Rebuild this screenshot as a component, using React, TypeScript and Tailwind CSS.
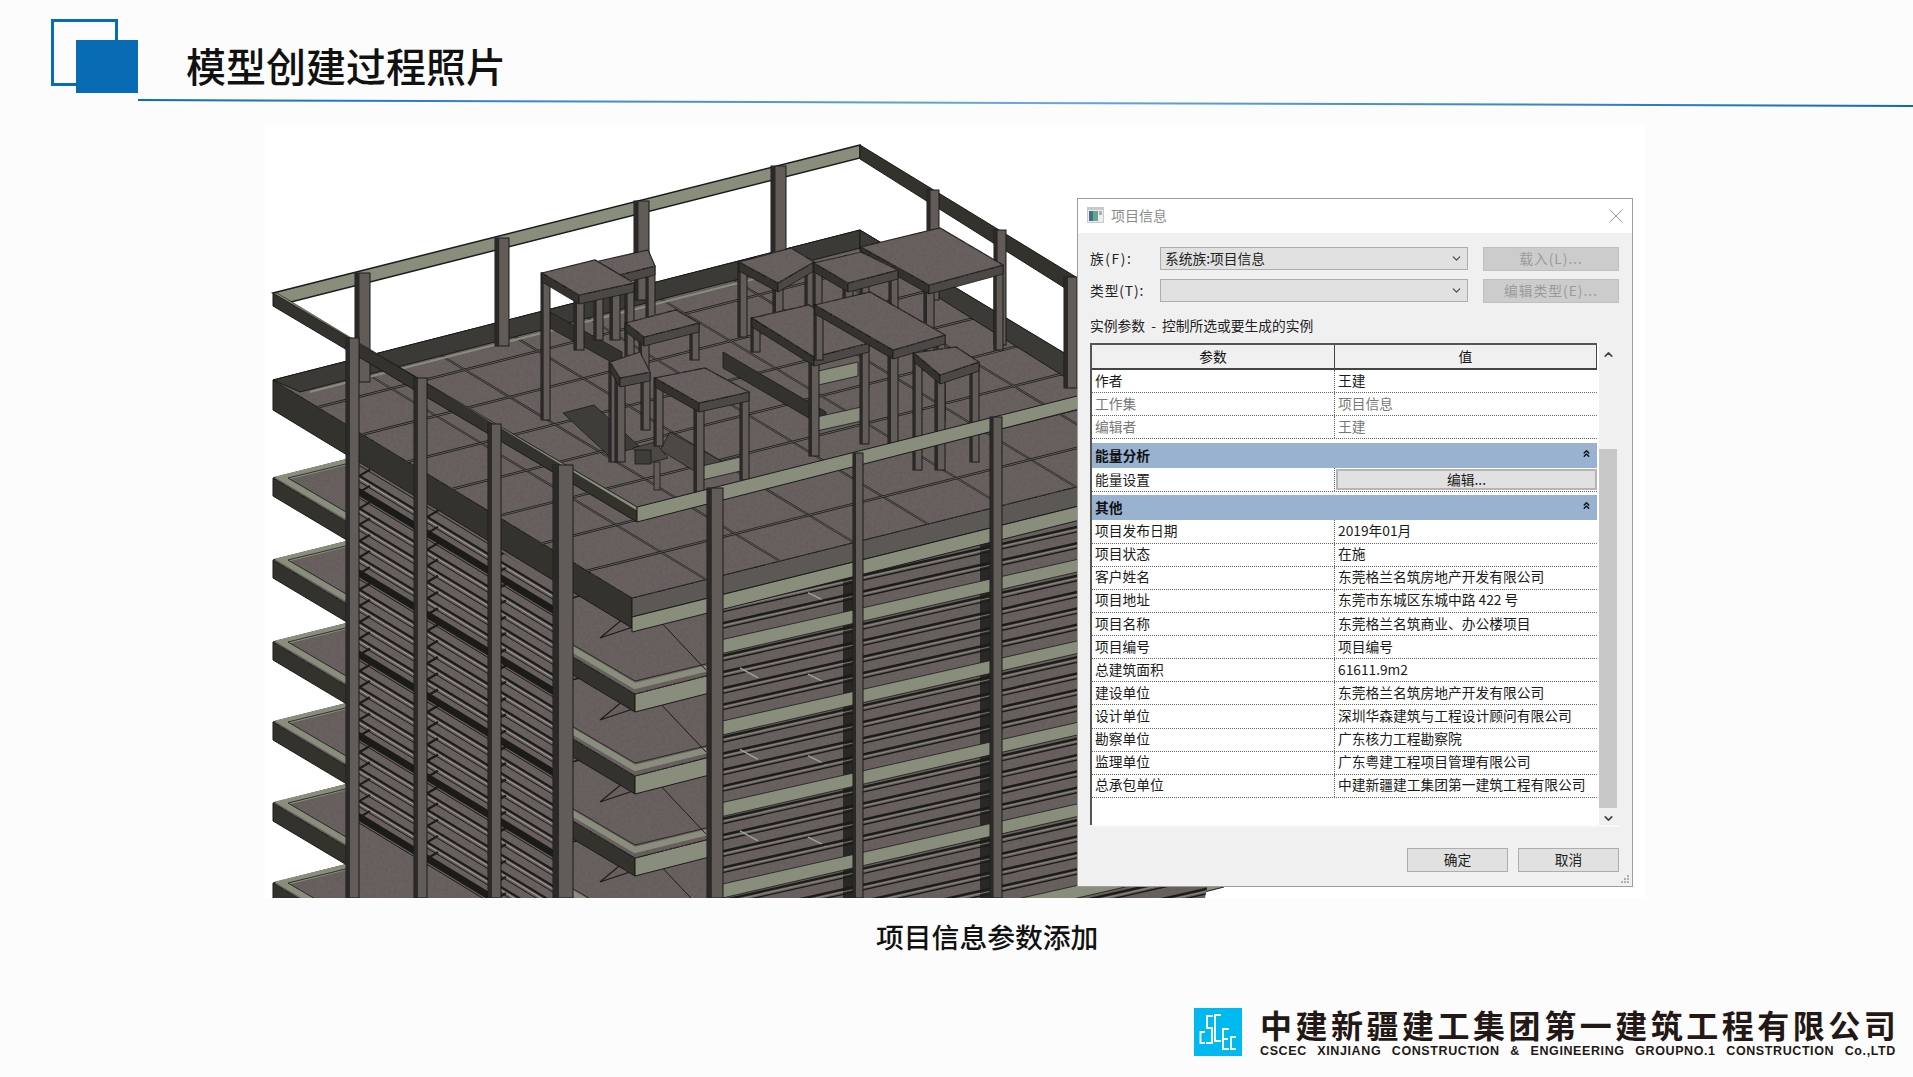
import { ChevronDown, ChevronUp, ChevronsUp, X } from 'lucide-react';

const CJK = 'font-["Noto_Sans_CJK_SC","Noto_Sans",sans-serif]';

const pts = (list: number[][]) => list.map(p => p.join(',')).join(' ');

const SAGE = '#888d7c';
const DARK = '#1b1b18';
const SIDE = '#33322d';
const STONE = '#6b6260';
const COL = '#625c59';

const FLOOR_YS = [883, 803, 722, 642, 560, 478];

function Floor({ y }: { y: number }) {
  const L = [273, y];
  const B = [860, y - 148];
  const R = [1224, y + 66];
  const F = [635, y + 216];
  return (
    <g>
      <polygon points={pts([L, F, [F[0], F[1] + 18], [L[0], L[1] + 18]])} fill={SIDE} stroke={DARK} />
      <polygon points={pts([F, R, [R[0], R[1] + 18], [F[0], F[1] + 18]])} fill={SAGE} stroke={DARK} />
      <polygon points={pts([L, B, R, F])} fill={STONE} stroke={DARK} filter="url(#stone)" />
      <polygon
        points={pts([[282, y], [860, y - 143], [1214, y + 66], [635, y + 208]])}
        fill="none"
        stroke={SAGE}
        strokeWidth={6}
      />
      <polygon
        points={pts([[288, y], [860, y - 139], [1206, y + 66], [635, y + 203]])}
        fill="none"
        stroke={DARK}
        strokeWidth={0.8}
      />
      <polyline
        points={pts([[600, y + 160], [660, y + 140], [690, y + 117], [636, y + 130], [600, y + 160]])}
        fill="none"
        stroke={DARK}
        strokeWidth={1.2}
      />
      <line x1={640} y1={y + 122} x2={706} y2={y + 192} stroke={DARK} strokeWidth={1} />
      <line x1={572} y1={y + 120} x2={660} y2={y + 96} stroke={DARK} strokeWidth={1.4} />
    </g>
  );
}

function LeftHatch() {
  const lines = [];
  for (let k = 0; k < 36; k++) {
    const y0 = 240 + k * 16.26;
    const heavy = k % 5 === 0;
    lines.push(
      <g key={k}>
        <line x1={346} y1={y0} x2={560} y2={y0 + 130} stroke="#a3a797" strokeWidth={1} transform="translate(0,3)" />
        <line x1={346} y1={y0} x2={560} y2={y0 + 130} stroke={DARK} strokeWidth={heavy ? 7 : 2.2} />
        <line x1={346} y1={y0 + 6} x2={560} y2={y0 + 136} stroke={DARK} strokeWidth={1} />
        {[0, 1, 2].map(i => (
          <line
            key={i}
            x1={358 + i * 68}
            y1={y0 + 9 + i * 41}
            x2={370 + i * 68}
            y2={y0 + 2 + i * 41}
            stroke={DARK}
            strokeWidth={2.2}
          />
        ))}
      </g>
    );
  }
  return (
    <g clipPath="url(#leftHatch)">
      <rect x={340} y={440} width={230} height={460} fill={STONE} filter="url(#stone)" />
      {lines}
    </g>
  );
}

function RightHatch() {
  const lines = [];
  for (let k = 0; k < 42; k++) {
    const y0 = 566 + (k - 6) * 16.3;
    const band = k % 5 === 0;
    lines.push(
      <g key={k}>
        {band ? (
          <polygon
            points={pts([[715, y0 + 10], [1220, y0 - 104], [1220, y0 - 92], [715, y0 + 24]])}
            fill={SAGE}
            stroke={DARK}
            strokeWidth={0.8}
          />
        ) : (
          <g>
            <line x1={715} y1={y0 + 10} x2={1220} y2={y0 - 104} stroke={DARK} strokeWidth={2.4} />
            <line x1={715} y1={y0 + 15} x2={1220} y2={y0 - 99} stroke={DARK} strokeWidth={1.4} />
            <line x1={715} y1={y0 + 12.5} x2={1220} y2={y0 - 101.5} stroke="#a0a493" strokeWidth={0.6} />
            {k % 5 === 2 && (
              <line x1={740} y1={y0 + 4} x2={758} y2={y0 + 14} stroke="#a0a493" strokeWidth={1.4} />
            )}
            {k % 5 === 3 && (
              <line x1={808} y1={y0 - 6} x2={826} y2={y0 + 3} stroke="#a0a493" strokeWidth={1.4} />
            )}
          </g>
        )}
      </g>
    );
  }
  return (
    <g clipPath="url(#rightHatch)">
      <rect x={715} y={420} width={510} height={480} fill={STONE} filter="url(#stone)" />
      <rect x={843} y={440} width={11} height={460} fill="#2a2826" />
      <rect x={980} y={420} width={11} height={480} fill="#2a2826" />
      {lines}
    </g>
  );
}

function Column({ x, y1, y2, w = 13 }: { x: number; y1: number; y2: number; w?: number }) {
  return (
    <g>
      <rect x={x} y={y1} width={w} height={y2 - y1} fill={COL} stroke={DARK} strokeWidth={1} />
      <rect x={x} y={y1} width={w * 0.3} height={y2 - y1} fill="#2b2927" />
    </g>
  );
}

type TableSpec = { top: number[][]; foot: number[] };

// top = left, rear, right, front corner of each rooftop box, foot = leg end at left, front, right
const TABLES: TableSpec[] = [
  { top: [[595, 262], [648, 250], [655, 266], [615, 276]], foot: [340, 340, 330] },
  { top: [[542, 273], [595, 260], [634, 283], [579, 295]], foot: [420, 350, 340] },
  { top: [[739, 262], [791, 248], [814, 262], [778, 283]], foot: [337, 330, 320] },
  { top: [[861, 247], [940, 228], [1003, 265], [929, 285]], foot: [330, 353, 350] },
  { top: [[814, 263], [861, 252], [898, 270], [848, 283]], foot: [323, 323, 315] },
  { top: [[626, 323], [676, 310], [699, 323], [644, 337]], foot: [365, 375, 360] },
  { top: [[752, 318], [809, 305], [869, 343], [814, 357]], foot: [352, 456, 444] },
  { top: [[815, 305], [870, 292], [945, 335], [893, 350]], foot: [360, 447, 420] },
  { top: [[914, 353], [956, 347], [979, 362], [940, 375]], foot: [470, 470, 462] },
  { top: [[610, 362], [640, 352], [650, 372], [620, 378]], foot: [462, 462, 430] },
  { top: [[655, 378], [705, 368], [749, 392], [699, 403]], foot: [446, 493, 480] }
];

function Table({ top, foot }: TableSpec) {
  const [l, , r, f] = top;
  const apron = 9;
  return (
    <g>
      <Column x={l[0] - 1} y1={l[1]} y2={foot[0]} w={9} />
      <Column x={f[0] - 5} y1={f[1]} y2={foot[1]} w={10} />
      <Column x={r[0] - 9} y1={r[1]} y2={foot[2]} w={9} />
      <polygon
        points={pts([l, f, [f[0], f[1] + apron], [l[0], l[1] + apron]])}
        fill={SIDE}
        stroke={DARK}
        strokeWidth={0.8}
      />
      <polygon
        points={pts([f, r, [r[0], r[1] + apron], [f[0], f[1] + apron]])}
        fill="#4b4845"
        stroke={DARK}
        strokeWidth={0.8}
      />
      <polygon points={pts(top)} fill={STONE} stroke={DARK} strokeWidth={1.2} filter="url(#stone)" />
    </g>
  );
}

// beams and the lift shaft that sit under the rooftop boxes
function RoofBeams() {
  return (
    <g stroke={DARK} strokeWidth={0.8}>
      <polygon points={pts([[563, 413], [594, 405], [640, 447], [608, 455]])} fill="#3f3d3a" />
      <polygon points={pts([[550, 312], [622, 352], [622, 368], [550, 328]])} fill={SIDE} />
      <polygon points={pts([[723, 352], [826, 412], [826, 428], [723, 368]])} fill={SIDE} />
      <polygon points={pts([[670, 432], [730, 466], [706, 478], [660, 450]])} fill="#4b4845" />
      <polygon points={pts([[814, 372], [858, 362], [858, 376], [814, 386]])} fill={SAGE} />
      <polygon points={pts([[812, 418], [866, 406], [866, 420], [812, 432]])} fill={SAGE} />
      <polygon points={pts([[702, 466], [745, 456], [745, 470], [702, 480]])} fill={SAGE} />
      <polygon points={pts([[633, 448], [655, 442], [668, 458], [645, 464]])} fill="#4b4845" />
      <rect x={635} y={450} width={16} height={14} fill="#3f3d3a" />
      <rect x={654} y={462} width={6} height={28} fill={COL} />
    </g>
  );
}

function Roof() {
  const L = [273, 380];
  const B = [860, 230];
  const R = [1224, 450];
  const F = [632, 598];
  const grid = [];
  for (let i = 1; i < 8; i++) {
    const t = i / 8;
    const u = [L[0] + (F[0] - L[0]) * t, L[1] + (F[1] - L[1]) * t, B[0] + (R[0] - B[0]) * t, B[1] + (R[1] - B[1]) * t];
    const v = [L[0] + (B[0] - L[0]) * t, L[1] + (B[1] - L[1]) * t, F[0] + (R[0] - F[0]) * t, F[1] + (R[1] - F[1]) * t];
    grid.push(
      <g key={i}>
        <line x1={u[0]} y1={u[1]} x2={u[2]} y2={u[3]} stroke={DARK} strokeWidth={2.4} />
        <line x1={u[0]} y1={u[1]} x2={u[2]} y2={u[3]} stroke="#a3a797" strokeWidth={0.5} />
        <line x1={v[0]} y1={v[1]} x2={v[2]} y2={v[3]} stroke={DARK} strokeWidth={2} />
        <line x1={v[0]} y1={v[1]} x2={v[2]} y2={v[3]} stroke="#a3a797" strokeWidth={0.5} />
      </g>
    );
  }
  return (
    <g>
      <polygon points={pts([L, F, [632, 628], [273, 410]])} fill={SIDE} stroke={DARK} />
      <polygon points={pts([F, R, [1224, 470], [632, 617]])} fill="#5c5855" stroke={DARK} />
      <polygon points={pts([[632, 617], [1224, 470], [1224, 484], [632, 632]])} fill={SAGE} stroke={DARK} />
      <polygon points={pts([L, B, R, F])} fill={STONE} stroke={DARK} filter="url(#stone)" />
      {grid}
      <polygon points={pts([[273, 380], [860, 230], [860, 248], [300, 392]])} fill="#3b3a36" stroke={DARK} />
      <polygon points={pts([[860, 230], [1076, 360], [1076, 384], [860, 248]])} fill="#3b3a36" stroke={DARK} />
      <line x1={310} y1={392} x2={860} y2={252} stroke={SAGE} strokeWidth={2} />
    </g>
  );
}

function TopFrame() {
  const A = [273, 293];
  const F = [637, 507];
  const R = [1224, 359];
  return (
    <g stroke={DARK}>
      <polygon points={pts([A, F, [637, 522], [273, 306]])} fill={SIDE} />
      <polygon points={pts([A, F, [637, 511], [277, 293]])} fill={SAGE} strokeWidth={0.6} />
      <polygon points={pts([F, R, [1224, 372], [637, 522]])} fill={SAGE} />
    </g>
  );
}

function Building() {
  return (
    <svg viewBox="265 125 1380 773" className="absolute inset-0 w-full h-full">
      <defs>
        <filter id="stone" x="-5%" y="-5%" width="110%" height="110%">
          <feTurbulence type="fractalNoise" baseFrequency="0.35" numOctaves={3} seed={4} result="noise" />
          <feColorMatrix
            in="noise"
            type="matrix"
            values="0 0 0 0 0.1  0 0 0 0 0.09  0 0 0 0 0.09  0.9 0 0 0 -0.28"
            result="speck"
          />
          <feComposite in="speck" in2="SourceAlpha" operator="in" result="clipped" />
          <feMerge>
            <feMergeNode in="SourceGraphic" />
            <feMergeNode in="clipped" />
          </feMerge>
        </filter>
        <clipPath id="leftHatch">
          <polygon points={pts([[346, 450], [560, 590], [560, 898], [346, 898]])} />
        </clipPath>
        <clipPath id="rightHatch">
          <polygon points={pts([[715, 590], [1224, 470], [1224, 800], [1205, 898], [715, 898]])} />
        </clipPath>
      </defs>

      {FLOOR_YS.map(y => (
        <Floor key={y} y={y} />
      ))}
      <LeftHatch />
      <RightHatch />
      <Roof />

      {/* rear frame with its columns */}
      <polygon
        points={pts([[273, 293], [860, 145], [860, 158], [291, 302]])}
        fill={SAGE}
        stroke={DARK}
        strokeWidth={1.5}
      />
      <polygon
        points={pts([[860, 145], [1076, 277], [1076, 295], [860, 159]])}
        fill={SIDE}
        stroke={DARK}
      />
      <Column x={355} y1={273} y2={382} w={15} />
      <Column x={495} y1={238} y2={346} w={14} />
      <Column x={634} y1={201} y2={300} w={15} />
      <Column x={771} y1={166} y2={254} w={15} />
      <Column x={927} y1={190} y2={300} w={12} />
      <Column x={994} y1={230} y2={345} w={12} />
      <Column x={1064} y1={277} y2={388} w={13} />

      <RoofBeams />
      {TABLES.map((t, i) => (
        <Table key={i} {...t} />
      ))}

      <TopFrame />

      {/* front columns */}
      <Column x={346} y1={338} y2={898} w={13} />
      <Column x={414} y1={378} y2={898} w={13} />
      <Column x={488} y1={424} y2={898} w={13} />
      <Column x={553} y1={465} y2={898} w={20} />
      <Column x={707} y1={488} y2={898} w={16} />
      <Column x={853} y1={453} y2={898} w={10} />
      <Column x={990} y1={417} y2={898} w={12} />
    </svg>
  );
}

const PLAIN_ROWS = [
  ['项目发布日期', '2019年01月'],
  ['项目状态', '在施'],
  ['客户姓名', '东莞格兰名筑房地产开发有限公司'],
  ['项目地址', '东莞市东城区东城中路 422 号'],
  ['项目名称', '东莞格兰名筑商业、办公楼项目'],
  ['项目编号', '项目编号'],
  ['总建筑面积', '61611.9m2'],
  ['建设单位', '东莞格兰名筑房地产开发有限公司'],
  ['设计单位', '深圳华森建筑与工程设计顾问有限公司'],
  ['勘察单位', '广东核力工程勘察院'],
  ['监理单位', '广东粤建工程项目管理有限公司'],
  ['总承包单位', '中建新疆建工集团第一建筑工程有限公司']
];

function Row({ name, value, muted }: { name: string; value: string; muted?: boolean }) {
  return (
    <div
      className={`flex h-[23.13px] items-center border-b border-dotted border-[#666] ${muted ? 'text-[#777]' : 'text-[#1a1a1a]'}`}
    >
      <div className="w-[242px] h-full flex items-center pl-[3px] pb-[1px]">{name}</div>
      <div className="flex-1 h-full flex items-center pl-[3px] pb-[1px] border-l border-dotted border-[#666] whitespace-nowrap">
        {value}
      </div>
    </div>
  );
}

function Group({ title }: { title: string }) {
  return (
    <div className="flex h-[25px] items-center justify-between bg-[#98b2d0] pl-[3px] pr-[5px] font-bold text-[#111]">
      <span>{title}</span>
      <ChevronsUp className="w-[11px] h-[11px] mb-1" strokeWidth={3} />
    </div>
  );
}

function Combo({ value, label, spaced }: { value: string; label: string; spaced?: boolean }) {
  return (
    <div className="flex items-center h-[25px]">
      <span className={`w-[70px] text-[#222] whitespace-nowrap ${spaced ? 'tracking-[1.6px]' : 'tracking-[0.9px]'}`}>
        {label}
      </span>
      <div className="w-[308px] h-[23px] flex items-center justify-between pl-1 pr-[4px] bg-[#e1e1e1] border border-[#adadad] text-[#222]">
        <span>{value}</span>
        <ChevronDown className="w-[13px] h-[13px] text-[#444]" strokeWidth={2} />
      </div>
    </div>
  );
}

function GreyButton({ text }: { text: string }) {
  return (
    <div className="w-[136px] h-[24px] ml-[15px] flex items-center justify-center bg-[#cccccc] border border-[#bfbfbf] text-[#9a9a9a] tracking-[1px] whitespace-nowrap">
      {text}
    </div>
  );
}

function DialogButton({ text }: { text: string }) {
  return (
    <div className="w-[101px] h-[24px] flex items-center justify-center bg-[#e1e1e1] border border-[#adadad] text-[#222]">
      {text}
    </div>
  );
}

function Dialog() {
  return (
    <div
      className={`absolute left-[812px] top-[73px] w-[556px] h-[689px] flex flex-col bg-[#f0f0f0] border border-[#9d9d9d] text-[13.75px] leading-none ${CJK}`}
    >
      <div className="h-[34px] bg-white flex items-center justify-between pl-[9px] pr-[4px]">
        <div className="flex items-center gap-[7px] text-[#8b8b8b] text-[14px] pb-[2px]">
          <svg viewBox="0 0 17 16" className="w-[17px] h-[16px]">
            <rect width="17" height="16" fill="#c9c9c9" />
            <rect x="1" y="3" width="15" height="12" fill="#eeeeee" />
            <rect x="2" y="4" width="4" height="10" fill="#3f6f8c" />
            <rect x="6" y="4" width="5" height="10" fill="#6aa58b" />
            <rect x="12" y="4" width="3" height="4" fill="#9db7c7" />
          </svg>
          <span>项目信息</span>
        </div>
        <X className="w-[24px] h-[24px] text-[#8a8a8a]" strokeWidth={0.9} />
      </div>

      <div className="flex-1 flex flex-col pl-[12px] pr-[13px] pt-[13px]">
        <div className="flex items-center">
          <Combo label="族(F):" value="系统族:项目信息" spaced />
          <GreyButton text="载入(L)..." />
        </div>
        <div className="flex items-center mt-[7px]">
          <Combo label="类型(T):" value="" />
          <GreyButton text="编辑类型(E)..." />
        </div>
        <div className="h-[20px] mt-[13px] flex items-center text-[#222] whitespace-pre">
          实例参数  -  控制所选或要生成的实例
        </div>

        <div className="mt-[7px] h-[484px] flex border-b-2 border-[#f8f8f8] bg-white">
          <div className="flex-1 flex flex-col border-l-2 border-t-2 border-[#555] bg-white">
            <div className="flex h-[25px] border-b-2 border-[#444] bg-[#f0f0f0] text-[#111]">
              <div className="w-[242px] flex items-center justify-center">参数</div>
              <div className="flex-1 flex items-center justify-center border-l border-[#444] border-r">值</div>
            </div>
            <Row name="作者" value="王建" />
            <Row name="工作集" value="项目信息" muted />
            <Row name="编辑者" value="王建" muted />
            <div className="h-[4px]" />
            <Group title="能量分析" />
            <div className="flex h-[24px] items-center border-b border-dotted border-[#666] text-[#1a1a1a]">
              <div className="w-[242px] pl-[3px]">能量设置</div>
              <div className="flex-1 h-full border-l border-dotted border-[#666] pl-[1px] py-[1px]">
                <div className="h-full flex items-center justify-center bg-[#e1e1e1] border-2 border-[#b5b5b5]">
                  编辑...
                </div>
              </div>
            </div>
            <div className="h-[3px]" />
            <Group title="其他" />
            {PLAIN_ROWS.map(r => (
              <Row key={r[0]} name={r[0]} value={r[1]} />
            ))}
          </div>
          <div className="w-[22px] pr-[2px] flex flex-col items-center bg-[#f0f0f0] border-l-2 border-white">
            <ChevronUp className="w-[13px] h-[13px] mt-[5px] text-[#444]" strokeWidth={3} />
            <div className="w-full h-[359px] mt-[88px] bg-[#c8c8c8]" />
            <ChevronDown className="w-[13px] h-[13px] mt-[4px] text-[#444]" strokeWidth={3} />
          </div>
        </div>

        <div className="mt-[21px] flex justify-end gap-[10px]">
          <DialogButton text="确定" />
          <DialogButton text="取消" />
        </div>
      </div>

      <svg viewBox="0 0 10 10" className="absolute right-[2px] bottom-[2px] w-[10px] h-[10px]">
        <g fill="#b0b0b0">
          <rect x="7" y="1" width="2" height="2" />
          <rect x="4" y="4" width="2" height="2" />
          <rect x="7" y="4" width="2" height="2" />
          <rect x="1" y="7" width="2" height="2" />
          <rect x="4" y="7" width="2" height="2" />
          <rect x="7" y="7" width="2" height="2" />
        </g>
      </svg>
    </div>
  );
}

// company mark: squared, stepped letterforms, drawn as a logo
function CompanyLogo() {
  return (
    <svg viewBox="0 0 48 48" className="w-[48px] h-[48px] shrink-0">
      <rect width="48" height="48" fill="#00b9f1" />
      <g fill="none" stroke="#ffffff" strokeWidth={1.9}>
        <polyline points="11,24 6.5,24 6.5,35 11,35" />
        <polyline points="19,8 13,8 13,20 18,20 18,35 12,35" />
        <polyline points="27,7 21,7 21,33 27,33" />
        <polyline points="35,21 29,21 29,41 35,41 M29,31 35,31" />
        <polyline points="29,31 34,31" />
        <polyline points="42,29 37,29 37,41 42,41" />
      </g>
    </svg>
  );
}

export default function App() {
  return (
    <div className={`w-[1913px] h-[1077px] flex flex-col overflow-hidden bg-[#fcfcfc] ${CJK}`}>
      <header className="h-[125px] pl-[51px] pt-[19px] shrink-0">
        <div className="flex items-start">
          <div className="relative w-[87px] h-[74px] shrink-0">
            <div className="w-[67px] h-[67px] border-[3px] border-[#0a6bb5]" />
            <div className="absolute left-[25px] top-[21px] w-[62px] h-[53px] bg-[#0a6bb5]" />
          </div>
          <h1 className="ml-[48px] mt-[23px] text-[40px] leading-[46px] font-medium text-[#111] whitespace-nowrap">
            模型创建过程照片
          </h1>
        </div>
        <div className="ml-[87px] mt-[6px] w-[1775px] h-[2px] origin-left rotate-[0.19deg] bg-gradient-to-r from-[#0a6bb5] via-[#6aa9d8] to-[#0a6bb5]" />
      </header>

      <main className="relative ml-[265px] w-[1380px] h-[773px] bg-white shrink-0">
        <Building />
        <Dialog />
      </main>

      <p className="h-[78px] pl-[876px] flex items-center text-[27.8px] font-medium text-[#111] whitespace-nowrap shrink-0">
        项目信息参数添加
      </p>

      <footer className="mt-[32px] pl-[1194px] flex items-start">
        <CompanyLogo />
        <div className="ml-[18px] w-[636px]">
          <div className="h-[32px] flex items-center justify-between text-[32px] leading-none font-bold text-[#231815] whitespace-nowrap">
            {'中建新疆建工集团第一建筑工程有限公司'.split('').map((c, i) => (
              <span key={i}>{c}</span>
            ))}
          </div>
          <div className='mt-[4px] font-["Liberation_Sans",sans-serif] text-[12.5px] leading-[14px] font-bold text-[#231815] flex justify-between tracking-[0.6px] whitespace-nowrap'>
            <span>CSCEC</span>
            <span>XINJIANG</span>
            <span>CONSTRUCTION</span>
            <span>&amp;</span>
            <span>ENGINEERING</span>
            <span>GROUPNO.1</span>
            <span>CONSTRUCTION</span>
            <span>Co.,LTD</span>
          </div>
        </div>
      </footer>
    </div>
  );
}
